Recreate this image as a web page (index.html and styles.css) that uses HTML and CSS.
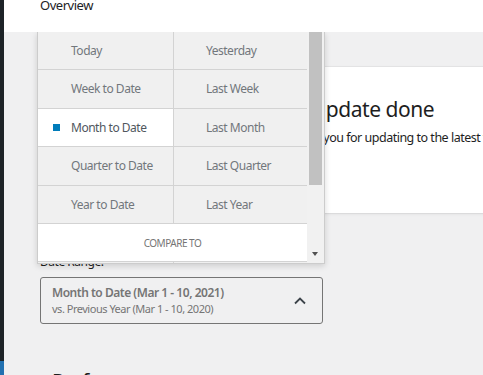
FILE: index.html
```html
<!DOCTYPE html>
<html lang="en">
<head>
    <meta charset="UTF-8">
    <meta name="viewport" content="width=device-width, initial-scale=1.0">
    <title>Overview</title>
    <link rel="stylesheet" href="styles.css">
</head>
<body>
    <div class="layout">
        <div class="sidebar">
            <div class="sidebar-active"></div>
        </div>

        <div class="main">
            <header class="topbar">
                <h1>Overview</h1>
            </header>

            <div class="content">
                <div class="notice">
                    <h2>Update done</h2>
                    <p>Thank you for updating to the latest version of WooCommerce.</p>
                </div>

                <div class="date-filter">
                    <label for="dateToggle">Date Range:</label>
                    <button class="date-toggle" id="dateToggle">
                        <span>
                            <span class="range-main">Month to Date (Mar 1 - 10, 2021)</span>
                            <span class="range-compare">vs. Previous Year (Mar 1 - 10, 2020)</span>
                        </span>
                        <svg class="chevron" width="14" height="9" viewBox="0 0 14 9">
                            <path d="M2 7.5 L7 2.5 L12 7.5" fill="none" stroke="#3c434a" stroke-width="1.8"/>
                        </svg>
                    </button>
                </div>

                <h2 class="section-title">Performance</h2>

                <!-- dropdown opened from the date range button -->
                <div class="popover">
                    <div class="presets">
                        <div class="preset-grid">
                            <div class="preset col-left">Today</div>
                            <div class="preset">Yesterday</div>
                            <div class="preset col-left">Week to Date</div>
                            <div class="preset">Last Week</div>
                            <div class="preset col-left is-selected">Month to Date</div>
                            <div class="preset">Last Month</div>
                            <div class="preset col-left">Quarter to Date</div>
                            <div class="preset">Last Quarter</div>
                            <div class="preset col-left">Year to Date</div>
                            <div class="preset">Last Year</div>
                            <div class="compare-heading">Compare to</div>
                            <div class="preset col-left"></div>
                            <div class="preset"></div>
                        </div>
                    </div>
                    <div class="scrollbar">
                        <div class="scroll-thumb"></div>
                        <div class="scroll-down"></div>
                    </div>
                </div>
            </div>
        </div>
    </div>
</body>
</html>
```

FILE: styles.css
```css
* {
    box-sizing: border-box;
}

html,
body {
    margin: 0;
    height: 100%;
    overflow: hidden;
}

body {
    font-family: "Noto Sans", "Open Sans", sans-serif;
    letter-spacing: -0.03em;
    background-color: #f0f0f1;
    color: #1e1e1e;
}

.layout {
    display: flex;
    height: 100%;
}

.sidebar {
    width: 4px;
    flex-shrink: 0;
    background-color: #1d2327;
    display: flex;
    flex-direction: column;
    justify-content: flex-end;
}

.sidebar-active {
    height: 14px;
    background-color: #2271b1;
}

.main {
    flex: 1;
    min-width: 0;
}

.topbar {
    height: 32px;
    background-color: #fff;
    padding-left: 36px;
    position: relative;
    z-index: 2;
    overflow: hidden;
}

.topbar h1 {
    margin: -3px 0 0;
    font-size: 13px;
    font-weight: 400;
    line-height: 16px;
    color: #1d2327;
}

.content {
    position: relative;
    padding: 35px 0 0 36px;
}

.notice {
    margin-left: 220px;
    width: 700px;
    height: 146px;
    background-color: #fff;
    padding: 26px 24px;
    box-shadow: 0 0 0 1px rgba(0, 0, 0, 0.04), 0 1px 3px rgba(0, 0, 0, 0.08);
}

.notice h2 {
    margin: 2px 0 6px 27px;
    font-size: 21px;
    font-weight: 400;
    line-height: 28px;
}

.notice p {
    margin: 0 0 0 3px;
    font-size: 12.5px;
    line-height: 18px;
    letter-spacing: -0.04em;
}

.date-filter {
    margin-top: 41px;
    width: 283px;
}

.date-filter label {
    display: block;
    font-size: 12px;
    line-height: 16px;
    margin-bottom: 7px;
}

.date-toggle {
    display: flex;
    align-items: center;
    justify-content: space-between;
    width: 100%;
    height: 47px;
    padding: 0 15px 0 11px;
    border: 1px solid #757575;
    border-radius: 3px;
    background: transparent;
    font: inherit;
    letter-spacing: inherit;
    text-align: left;
    color: #757575;
    cursor: pointer;
}

.range-main {
    display: block;
    font-size: 12px;
    font-weight: 600;
    line-height: 16px;
}

.range-compare {
    display: block;
    font-size: 11px;
    line-height: 15px;
}

.section-title {
    margin: 45px 0 0 12px;
    font-size: 20px;
    font-weight: 400;
    line-height: 24px;
}

.popover {
    position: absolute;
    top: -0.5px;
    left: 33px;
    width: 288px;
    height: 232.5px;
    display: flex;
    background-color: #fff;
    border: 1px solid #ccc;
    border-top: none;
    box-shadow: 0 2px 6px rgba(0, 0, 0, 0.15);
    overflow: hidden;
    z-index: 1;
}

.presets {
    width: 269px;
    flex-shrink: 0;
}

.preset-grid {
    display: grid;
    grid-template-columns: 136px 133px;
}

.preset {
    height: 38.5px;
    display: flex;
    align-items: center;
    padding-left: 32px;
    background-color: #f0f0f0;
    border-bottom: 1px solid #d3d3d3;
    font-size: 12px;
    color: #72777c;
}

.preset.col-left {
    padding-left: 33px;
    border-right: 1px solid #d3d3d3;
}

.preset.is-selected {
    position: relative;
    background-color: #fff;
    color: #50575e;
}

.preset.is-selected::before {
    content: "";
    position: absolute;
    left: 15px;
    top: 15px;
    width: 7px;
    height: 7px;
    background-color: #007cba;
}

.compare-heading {
    grid-column: span 2;
    height: 38px;
    display: flex;
    align-items: center;
    justify-content: center;
    background-color: #fff;
    border-bottom: 1px solid #d3d3d3;
    font-size: 10px;
    text-transform: uppercase;
    color: #757575;
}

.scrollbar {
    flex: 1;
    position: relative;
    background-color: #f1f1f1;
}

.scroll-thumb {
    height: 153.5px;
    margin: 0 2px;
    background-color: #c1c1c1;
}

.scroll-down {
    position: absolute;
    left: 5px;
    bottom: 7px;
    width: 0;
    height: 0;
    border-left: 3.5px solid transparent;
    border-right: 3.5px solid transparent;
    border-top: 4px solid #505050;
}
```
